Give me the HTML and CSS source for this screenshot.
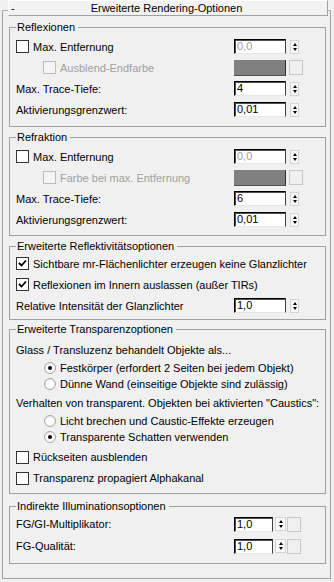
FILE: index.html
```html
<!DOCTYPE html>
<html lang="de">
<head>
    <meta charset="UTF-8">
    <meta name="viewport" content="width=device-width, initial-scale=1.0">
    <title>Erweiterte Rendering-Optionen</title>
    <link rel="stylesheet" href="styles.css">
</head>
<body>
    <div class="rollout">
        <div class="rollout-head">
            <span class="toggle">-</span>
            <span class="title">Erweiterte Rendering-Optionen</span>
        </div>

        <fieldset class="group g1">
            <legend>Reflexionen</legend>
            <div class="row">
                <span class="check"><span class="box"></span>Max. Entfernung</span>
                <span class="ctrl"><span class="field off">0,0</span><span class="spinner"></span></span>
            </div>
            <div class="row">
                <span class="check indent off"><span class="box"></span>Ausblend-Endfarbe</span>
                <span class="ctrl"><span class="swatch"></span><span class="pick"></span></span>
            </div>
            <div class="row">
                <span>Max. Trace-Tiefe:</span>
                <span class="ctrl"><span class="field">4</span><span class="spinner"></span></span>
            </div>
            <div class="row">
                <span>Aktivierungsgrenzwert:</span>
                <span class="ctrl"><span class="field">0,01</span><span class="spinner"></span></span>
            </div>
        </fieldset>

        <fieldset class="group g2">
            <legend>Refraktion</legend>
            <div class="row">
                <span class="check"><span class="box"></span>Max. Entfernung</span>
                <span class="ctrl"><span class="field off">0,0</span><span class="spinner"></span></span>
            </div>
            <div class="row">
                <span class="check indent off"><span class="box"></span>Farbe bei max. Entfernung</span>
                <span class="ctrl"><span class="swatch"></span><span class="pick"></span></span>
            </div>
            <div class="row">
                <span>Max. Trace-Tiefe:</span>
                <span class="ctrl"><span class="field">6</span><span class="spinner"></span></span>
            </div>
            <div class="row">
                <span>Aktivierungsgrenzwert:</span>
                <span class="ctrl"><span class="field">0,01</span><span class="spinner"></span></span>
            </div>
        </fieldset>

        <fieldset class="group g3">
            <legend>Erweiterte Reflektivitätsoptionen</legend>
            <div class="row">
                <span class="check"><span class="box"><svg viewBox="0 0 11 11"><polyline points="2,5 4.5,7.5 9,2.5"/></svg></span>Sichtbare mr-Flächenlichter erzeugen keine Glanzlichter</span>
            </div>
            <div class="row">
                <span class="check"><span class="box"><svg viewBox="0 0 11 11"><polyline points="2,5 4.5,7.5 9,2.5"/></svg></span>Reflexionen im Innern auslassen (außer TIRs)</span>
            </div>
            <div class="row">
                <span>Relative Intensität der Glanzlichter</span>
                <span class="ctrl"><span class="field">1,0</span><span class="spinner"></span></span>
            </div>
        </fieldset>

        <fieldset class="group g4">
            <legend>Erweiterte Transparenzoptionen</legend>
            <div class="row">
                <span>Glass / Transluzenz behandelt Objekte als...</span>
            </div>
            <div class="row short">
                <span class="option"><span class="radio on"></span>Festkörper (erfordert 2 Seiten bei jedem Objekt)</span>
            </div>
            <div class="row short">
                <span class="option"><span class="radio"></span>Dünne Wand (einseitige Objekte sind zulässig)</span>
            </div>
            <div class="row">
                <span>Verhalten von transparent. Objekten bei aktivierten "Caustics":</span>
            </div>
            <div class="row short">
                <span class="option"><span class="radio"></span>Licht brechen und Caustic-Effekte erzeugen</span>
            </div>
            <div class="row short">
                <span class="option"><span class="radio on"></span>Transparente Schatten verwenden</span>
            </div>
            <div class="row tall">
                <span class="check"><span class="box"></span>Rückseiten ausblenden</span>
            </div>
            <div class="row low">
                <span class="check"><span class="box"></span>Transparenz propagiert Alphakanal</span>
            </div>
        </fieldset>

        <fieldset class="group g5">
            <legend>Indirekte Illuminationsoptionen</legend>
            <div class="row mid">
                <span>FG/GI-Multiplikator:</span>
                <span class="ctrl"><span class="field narrow">1,0</span><span class="spinner wide"></span><span class="pick"></span></span>
            </div>
            <div class="row mid">
                <span>FG-Qualität:</span>
                <span class="ctrl"><span class="field narrow">1,0</span><span class="spinner wide"></span><span class="pick"></span></span>
            </div>
        </fieldset>
    </div>
</body>
</html>
```

FILE: styles.css
```css
body {
    margin: 0;
    background-color: #f0f0f0;
    font-family: "Liberation Sans", Arial, sans-serif;
    font-size: 11px;
    color: #000;
}

.rollout {
    margin: 10px 3px 3px 2px;
    height: 569px;
    box-sizing: border-box;
    border: 1px solid #a0a0a0;
    border-top-color: #b4b4b4;
}

.rollout-head {
    margin: -11px 2px 0 5px;
    height: 16px;
    box-sizing: border-box;
    display: grid;
    grid-template-columns: 1fr auto 1fr;
    align-items: center;
    padding: 0 5px 0 2px;
    background-color: #f2f2f2;
    border: 1px solid #a0a0a0;
    border-top-color: #fff;
    border-left-color: #fff;
}

.toggle {
    line-height: 12px;
}

.title {
    line-height: 12px;
}

.group {
    margin: 4px 4px 0 6px;
    padding: 0 22px 0 6px;
    border: 1px solid #a0a0a0;
    min-width: 0;
}

.group legend {
    padding: 0 3px 0 1px;
    line-height: 13px;
}

.g1 {
    margin-top: 5px;
    padding-top: 2px;
    padding-bottom: 6px;
}

.g2 {
    padding-top: 2px;
    padding-bottom: 5px;
}

.g3 {
    padding-bottom: 3px;
}

.g4 {
    margin-top: 3px;
    padding-top: 3px;
    padding-bottom: 6px;
}

.g5 {
    margin-top: 6px;
    padding-bottom: 6px;
}

.row {
    height: 21px;
    display: flex;
    align-items: center;
    white-space: nowrap;
}

.row.short {
    height: 16px;
}

.row.tall {
    height: 24px;
}

.row.low {
    height: 18px;
}

.row.mid {
    height: 22px;
}

.check,
.option {
    display: flex;
    align-items: center;
}

.check .box {
    width: 13px;
    height: 13px;
    box-sizing: border-box;
    border: 1px solid #333;
    background-color: #fff;
    margin-right: 4px;
    display: flex;
    align-items: center;
    justify-content: center;
}

.check .box svg {
    width: 11px;
    height: 11px;
    fill: none;
    stroke: #000;
    stroke-width: 1.8;
}

.check.indent {
    margin-left: 27px;
}

.check.off {
    color: #a0a0a0;
}

.check.off .box {
    border-color: #bcbcbc;
    background-color: #f4f4f4;
}

.option {
    margin-left: 28px;
}

.radio {
    width: 12px;
    height: 12px;
    box-sizing: border-box;
    border-radius: 50%;
    border: 1px solid #a8a8a8;
    background: radial-gradient(circle at 50% 60%, #fff 35%, #dedede 100%);
    margin-right: 4px;
    display: flex;
    align-items: center;
    justify-content: center;
}

.radio.on::after {
    content: "";
    width: 4px;
    height: 4px;
    border-radius: 50%;
    background-color: #000;
}

.ctrl {
    margin-left: auto;
    width: 69px;
    display: flex;
    align-items: center;
}

.field {
    width: 52px;
    height: 15px;
    box-sizing: border-box;
    padding-left: 2px;
    line-height: 12px;
    background-color: #fff;
    border: 1px solid;
    border-color: #000 #404040 #e8e8e8 #000;
    box-shadow: inset 1px 1px 0 #505050;
}

.field.off {
    color: #a0a0a0;
}

.field.narrow {
    width: 39px;
}

.spinner {
    width: 9px;
    height: 14px;
    box-sizing: border-box;
    margin-left: 4px;
    border: 1px solid #d4d4d4;
    background-color: #f8f8f8;
    display: flex;
    flex-direction: column;
    align-items: center;
    justify-content: space-evenly;
}

.spinner.wide {
    width: 11px;
    margin-left: 2px;
}

.spinner::before {
    content: "";
    border-left: 2px solid transparent;
    border-right: 2px solid transparent;
    border-bottom: 3px solid #000;
}

.spinner::after {
    content: "";
    border-left: 2px solid transparent;
    border-right: 2px solid transparent;
    border-top: 3px solid #000;
}

.swatch {
    width: 52px;
    height: 16px;
    box-sizing: border-box;
    background-color: #808080;
    border-right: 1px solid #303030;
    border-bottom: 1px solid #505050;
}

.pick {
    width: 14px;
    height: 15px;
    box-sizing: border-box;
    margin-left: 3px;
    background-color: #f0f0f0;
    border: 1px solid #c8c8c8;
}

.spinner.wide + .pick {
    margin-left: 1px;
}
```
